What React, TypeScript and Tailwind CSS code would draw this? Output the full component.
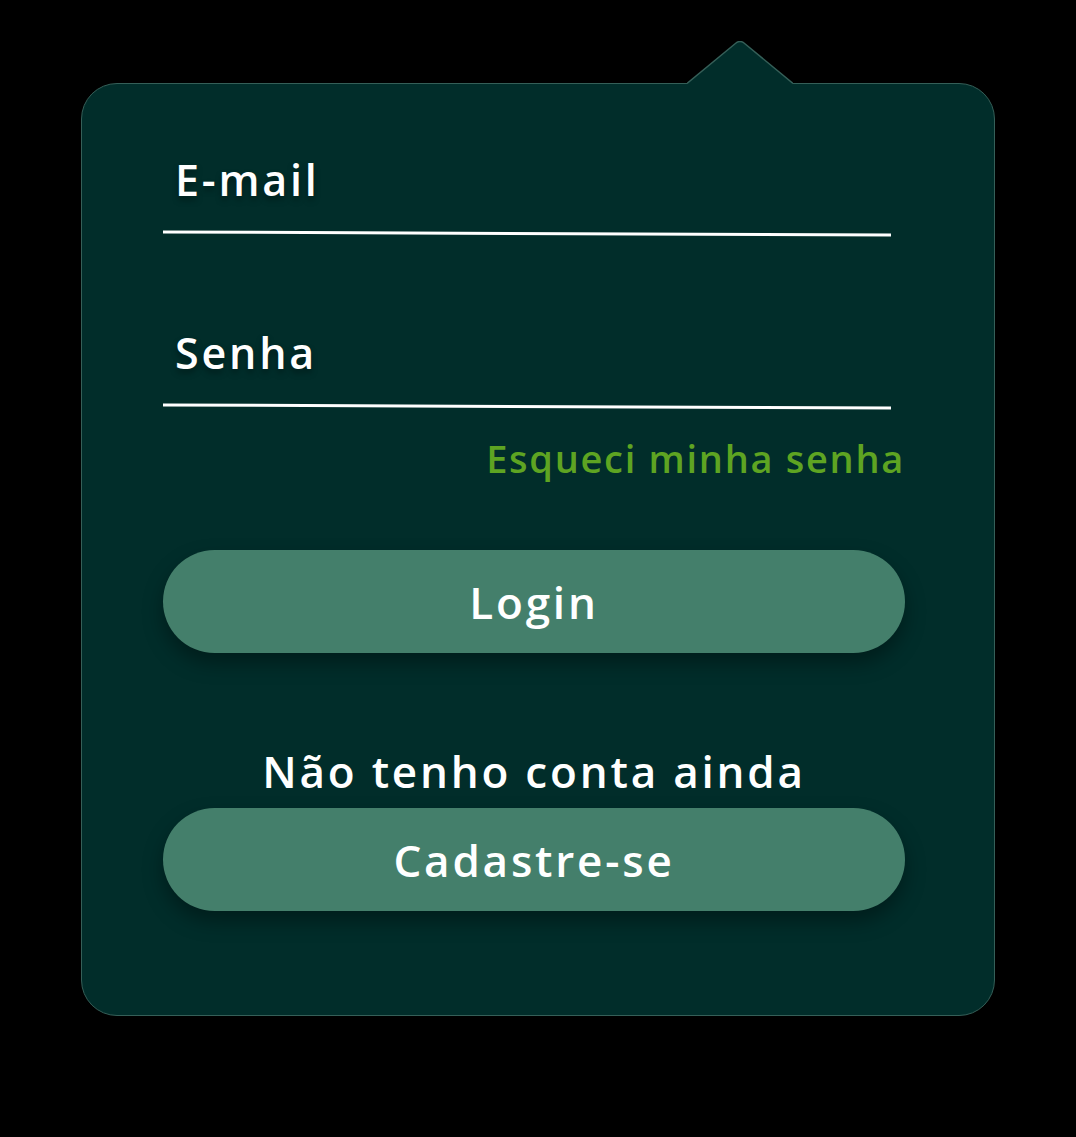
import React from "react";

export default function App() {
  return (
    <div className="min-h-[1137px] w-[1076px] bg-black pt-[41px] font-['Open_Sans',sans-serif] text-white">
      <div className="relative ml-[81px] flex w-[914px] flex-col">
        {/* pointer */}
        <svg
          className="absolute left-[606px] top-0 z-10 h-[44px] w-[106px]"
          viewBox="0 0 106 44"
        >
          <path d="M0 44 L0 42.5 L49 2 Q53 -1 57 2 L106 42.5 L106 44 Z" fill="#012d2a" />
          <path
            d="M0 42.5 L49 2 Q53 -1 57 2 L106 42.5"
            fill="none"
            stroke="#355f58"
            strokeWidth="1.5"
          />
        </svg>
        <div className="mt-[42px] h-[933px] rounded-[36px] border border-[#355f58] bg-[#012d2a] pl-[81px] pr-[89px] pt-[66px]">
          <label className="block pl-[12px] text-[43px] font-semibold leading-[60px] tracking-[2.8px] [text-shadow:0_4px_6px_rgba(0,0,0,0.35)]">
            E-mail
          </label>
          <div className="mt-[22px] mr-[14px] h-[3px] rotate-[0.25deg] bg-white" />

          <label className="mt-[88px] block pl-[12px] text-[43px] font-semibold leading-[60px] tracking-[2.8px] [text-shadow:0_4px_6px_rgba(0,0,0,0.35)]">
            Senha
          </label>
          <div className="mt-[22px] mr-[14px] h-[3px] rotate-[0.25deg] bg-white" />

          <div className="mt-[25px] text-right text-[38px] font-semibold leading-[50px] tracking-[1.7px] text-[#5ea422]">
            Esqueci minha senha
          </div>

          <button className="mt-[67px] flex h-[103px] w-full items-center justify-center rounded-full bg-[#447f6b] text-[44px] font-semibold tracking-[2.8px] shadow-[0_10px_20px_rgba(0,0,0,0.35)]">
            Login
          </button>

          <div className="mt-[88px] text-center text-[44px] font-semibold leading-[60px] tracking-[2.8px]">
            Não tenho conta ainda
          </div>
          <button className="mt-[7px] flex h-[103px] w-full items-center justify-center rounded-full bg-[#447f6b] text-[44px] font-semibold tracking-[2.8px] shadow-[0_10px_20px_rgba(0,0,0,0.35)]">
            Cadastre-se
          </button>
        </div>
      </div>
    </div>
  );
}
